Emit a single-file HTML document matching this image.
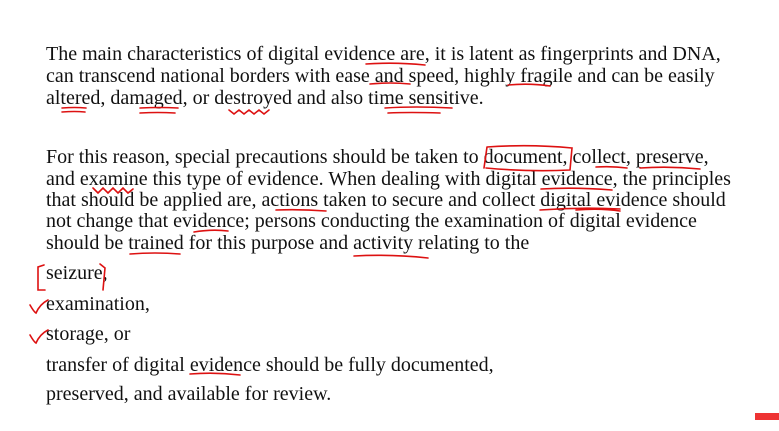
<!DOCTYPE html>
<html><head><meta charset="utf-8"><style>
body{margin:0;width:779px;height:431px;background:#fff;position:relative;overflow:hidden;font-family:"Liberation Serif",serif;font-size:20px;color:#111}
.l{position:absolute;left:46px;white-space:nowrap;line-height:22px}
svg{position:absolute;left:0;top:0}
</style></head><body>
<div class="l" style="top:43px">The main characteristics of digital evidence are, it is latent as fingerprints and DNA,</div>
<div class="l" style="top:65px">can transcend national borders with ease and speed, highly fragile and can be easily</div>
<div class="l" style="top:87px">altered, damaged, or destroyed and also time sensitive.</div>
<div class="l" style="top:146px">For this reason, special precautions should be taken to document, collect, preserve,</div>
<div class="l" style="top:168px">and examine this type of evidence. When dealing with digital evidence, the principles</div>
<div class="l" style="top:189px">that should be applied are, actions taken to secure and collect digital evidence should</div>
<div class="l" style="top:210px">not change that evidence; persons conducting the examination of digital evidence</div>
<div class="l" style="top:232px">should be trained for this purpose and activity relating to the</div>
<div class="l" style="top:262px">seizure,</div>
<div class="l" style="top:293px">examination,</div>
<div class="l" style="top:323px">storage, or</div>
<div class="l" style="top:354px">transfer of digital evidence should be fully documented,</div>
<div class="l" style="top:383px">preserved, and available for review.</div>
<div style="position:absolute;left:755px;top:413px;width:24px;height:7px;background:#e33"></div>
<svg width="779" height="431" fill="none" stroke="#d11" stroke-width="1.6" stroke-linecap="round">
<path d="M366 64 Q395 62 425 65"/><path d="M370 84 Q390 82 410 84"/>
<path d="M508 85 Q530 83 550 86"/><path d="M62 108 Q75 107 86 108"/><path d="M62 112 Q75 111 85 112"/>
<path d="M140 108 Q160 107 178 108"/><path d="M140 113 Q158 112 175 113"/>
<path d="M229 110 l5 4 5 -4 5 4 5 -4 5 4 5 -4 5 4 5 -4"/>
<path d="M385 108 Q415 106 452 108"/><path d="M388 113 Q410 112 440 113"/>
<path d="M487 147 L484 168 M487 147 Q530 144 572 148 L570 170 Q530 172 486 168"/>
<path d="M596 167 Q612 166 627 168"/><path d="M640 168 Q670 166 700 169"/>
<path d="M93 188 l5 5 5 -5 5 5 5 -5 5 5 5 -5 5 5 5 -4"/>
<path d="M541 189 Q575 187 612 190"/><path d="M576 210 Q600 208 620 211"/>
<path d="M276 210 Q300 209 326 211"/><path d="M540 210 Q580 207 620 209"/>
<path d="M194 232 Q212 229 228 231"/><path d="M130 254 Q155 252 180 254"/>
<path d="M354 256 Q390 254 428 258"/>
<path d="M44 265 L38 267 L38 290 L45 290"/><path d="M100 264 L105 268 L103 290"/>
<path d="M30 305 Q34 312 36 313 Q40 304 48 300"/><path d="M30 335 Q34 342 36 343 Q40 334 48 330"/>
<path d="M190 374 Q215 372 240 375"/>
</svg>
</body></html>
